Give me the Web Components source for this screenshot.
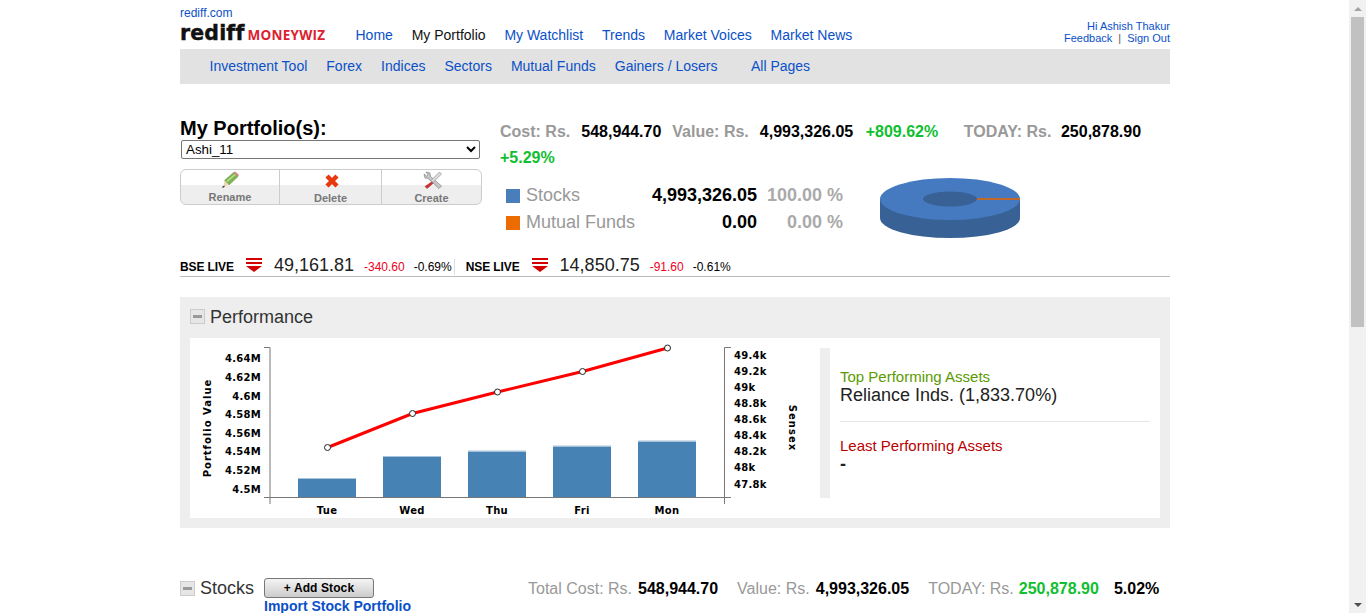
<!DOCTYPE html>
<html>
<head>
<meta charset="utf-8">
<title>My Portfolio</title>
<style>
  html, body { margin: 0; padding: 0; height: 613px; overflow: hidden; background: #fff; }
  body { display: flex; font-family: "Liberation Sans", Arial, sans-serif; }
  #page { flex: 1; height: 613px; overflow: hidden; }
  #wrap { width: 990px; margin-left: 180px; }
</style>
</head>
<body>
<div id="page">
  <div id="wrap">
    <rm-header></rm-header>
    <rm-subnav></rm-subnav>
    <rm-summary></rm-summary>
    <rm-index-strip></rm-index-strip>
    <rm-performance></rm-performance>
    <rm-stocks-bar></rm-stocks-bar>
  </div>
</div>
<rm-scrollbar></rm-scrollbar>

<script>
const LINK = '#0a50c8';

// Barra superior: logo, menu principal y usuario
class RmHeader extends HTMLElement {
  constructor() {
    super();
    this.attachShadow({ mode: 'open' });
    const items = ['Home', 'My Portfolio', 'My Watchlist', 'Trends', 'Market Voices', 'Market News'];
    this.shadowRoot.innerHTML = `
      <style>
        :host { display: flex; height: 49px; position: relative; font-size: 14px; }
        a { color: ${LINK}; text-decoration: none; }
        .brand { width: 175.5px; flex: none; padding-top: 7px; box-sizing: border-box; }
        .top { font-size: 12px; line-height: 13px; display: block; }
        .logo { display: flex; align-items: baseline; height: 22px; line-height: 22px; margin-top: 2px; white-space: nowrap; }
        .rediff { font: 700 20.5px/22px "DejaVu Sans", sans-serif; color: #111; letter-spacing: .15px; -webkit-text-stroke: .4px #111; }
        .wiz { font: 700 13.5px/22px "Open Sans", sans-serif; color: #dc2230; margin-left: 3px; letter-spacing: .25px; }
        nav { display: flex; gap: 18.8px; padding-top: 27px; line-height: 16px; white-space: nowrap; }
        .on { color: #111; }
        .user { margin-left: auto; padding-top: 20px; text-align: right; font-size: 11px; line-height: 12px; color: ${LINK}; white-space: nowrap; }
        .sep { color: #555; margin: 0 6px; }
      </style>
      <div class="brand">
        <a class="top" href="#">rediff.com</a>
        <div class="logo"><span class="rediff">rediff</span><span class="wiz">MONEYWIZ</span></div>
      </div>
      <nav>${items.map(t => `<a href="#" class="${t === 'My Portfolio' ? 'on' : ''}">${t}</a>`).join('')}</nav>
      <div class="user">Hi Ashish Thakur<br><a href="#">Feedback</a><span class="sep">|</span><a href="#">Sign Out</a></div>
    `;
  }
}

class RmSubnav extends HTMLElement {
  constructor() {
    super();
    this.attachShadow({ mode: 'open' });
    const items = ['Investment Tool', 'Forex', 'Indices', 'Sectors', 'Mutual Funds', 'Gainers / Losers'];
    this.shadowRoot.innerHTML = `
      <style>
        :host { display: flex; gap: 19px; height: 35px; align-items: center; padding: 0 0 2px 29.5px; box-sizing: border-box; background: #e2e2e2; font-size: 14px; white-space: nowrap; }
        a { color: ${LINK}; text-decoration: none; }
        .all { margin-left: 14.5px; }
      </style>
      ${items.map(t => `<a href="#">${t}</a>`).join('')}
      <a class="all" href="#">All Pages</a>
    `;
  }
}

// Botones Rename / Delete / Create
class RmToolGroup extends HTMLElement {
  constructor() {
    super();
    this.attachShadow({ mode: 'open' });
    this.shadowRoot.innerHTML = `
      <style>
        :host { display: grid; grid-template-columns: 98px 102px 1fr; width: 302px; height: 36px; box-sizing: border-box; border: 1px solid #ccc; border-radius: 6px; overflow: hidden; background: linear-gradient(#fff 15px, #eee 15px); font: 700 11px/12px "Liberation Sans", sans-serif; color: #777; }
        div { display: flex; flex-direction: column; align-items: center; height: 100%; position: relative; }
        div + div { border-left: 1px solid #ccc; }
        svg { width: 20px; height: 20px; display: block; margin-top: 1px; margin-bottom: -3px; }
        span { margin-top: 3px; }
        .low { margin-top: 4px; }
      </style>
      <div>
        <svg viewBox="0 0 20 20">
          <path d="M4.500 9.500 L13.500 1.500 L18 5.500 L9 14 Z" fill="#7fb552" stroke="#5c8a3a" stroke-width=".5"/>
          <path d="M7 10.500 L15 3.500" stroke="#bfe09a" stroke-width="1.500"/>
          <path d="M13.500 1.500 L15 .5 L19 4 L18 5.500 Z" fill="#d98080"/>
          <path d="M4.500 9.500 L9 14 L3.500 15.500 Z" fill="#ecdcb4"/>
          <path d="M2.500 16.500 L4.500 15" stroke="#333" stroke-width="1.200"/>
        </svg>
        <span>Rename</span>
      </div>
      <div>
        <svg viewBox="0 0 20 20"><path d="M6 5 L16 15 M16 5 L6 15" stroke="#e8380d" stroke-width="4.500" fill="none"/></svg>
        <span class="low">Delete</span>
      </div>
      <div>
        <svg viewBox="0 0 20 20" style="overflow:visible">
          <path d="M4 1 L8 2 L8.500 5.500 L19.500 15 L17 17.500 L6 7.500 L3 7 L2 3 L4.500 5 L6 3.800 Z" fill="#c4c6ca" stroke="#777" stroke-width=".6"/>
          <path d="M17.500 1 L19.500 3 L11 11.500 L9 9.500 Z" fill="#dcdcdc" stroke="#888" stroke-width=".6"/>
          <path d="M9.500 11 L11 12.500 L5 17.500 L3 15.500 Z" fill="#d43030" stroke="#922" stroke-width=".5"/>
        </svg>
        <span class="low">Create</span>
      </div>
    `;
  }
}

// Resumen: selector, totales y distribucion
class RmSummary extends HTMLElement {
  constructor() {
    super();
    this.attachShadow({ mode: 'open' });
    this.shadowRoot.innerHTML = `
      <style>
        :host { display: flex; height: 168px; padding-top: 33px; box-sizing: border-box; }
        .left { width: 320px; flex: none; }
        h1 { margin: 0; font: 700 20px/23px "Liberation Sans", sans-serif; color: #000; }
        select { display: block; width: 299px; height: 19px; margin: 0 0 10px 1px; padding: 0; font: 13.33px "Liberation Sans", sans-serif; color: #000; background: #fff; border: 1px solid #767676; border-radius: 2px; box-sizing: border-box; }
        .right { flex: 1; min-width: 0; }
        .stats { font: 700 16px/26px "Liberation Sans", sans-serif; height: 52px; margin-top: 2px; }
        .g { color: #999; }
        .b { color: #000; }
        .up { color: #10c030; }
        .stats span { margin-right: 11px; }
        .stats .wide { margin-right: 12.5px; }
        .stats .tab { margin-right: 25.5px; }
        .stats .near { margin-right: 9.5px; }
        .alloc { display: flex; margin-top: 11px; padding-left: 6px; }
        .rows { display: grid; grid-template-columns: 20px 120px 111px 86px; grid-auto-rows: 27px; align-items: center; font: 18px/27px "Liberation Sans", sans-serif; }
        .rows i { display: block; width: 14px; height: 14px; }
        .name { color: #999; }
        .val { text-align: right; font-weight: 700; color: #000; }
        .pct { text-align: right; font-weight: 700; color: #aaa; }
        svg { margin: -4px 0 0 37px; display: block; flex: none; }
      </style>
      <div class="left">
        <h1>My Portfolio(s):</h1>
        <select><option>Ashi_11</option></select>
        <rm-tool-group></rm-tool-group>
      </div>
      <div class="right">
        <div class="stats"><span class="g">Cost: Rs.</span><span class="b">548,944.70</span><span class="g">Value: Rs.</span><span class="b wide">4,993,326.05</span><span class="up tab">+809.62%</span><span class="g near">TODAY: Rs.</span><span class="b">250,878.90</span> <span class="up">+5.29%</span></div>
        <div class="alloc">
          <div class="rows">
            <i style="background:#4a7ebb"></i><span class="name">Stocks</span><span class="val">4,993,326.05</span><span class="pct">100.00 %</span>
            <i style="background:#ec6c00"></i><span class="name">Mutual Funds</span><span class="val">0.00</span><span class="pct">0.00 %</span>
          </div>
          <svg width="140" height="62" viewBox="0 0 140 62">
            <path d="M0 21 V40 A70 20 0 0 0 140 40 V21 Z" fill="#386296"/>
            <ellipse cx="70" cy="21" rx="70" ry="21" fill="#457ac0"/>
            <ellipse cx="70" cy="21" rx="27" ry="7.500" fill="#386296"/>
            <rect x="97" y="20" width="43" height="2" fill="#c0682c"/>
          </svg>
        </div>
      </div>
    `;
  }
}

// Linea BSE / NSE
class RmIndexStrip extends HTMLElement {
  constructor() {
    super();
    this.attachShadow({ mode: 'open' });
    const arrow = `<svg width="16" height="14" viewBox="0 0 16 14"><rect x="0" y="0" width="16" height="2" fill="#d40000"/><rect x="0" y="4" width="16" height="2" fill="#d40000"/><path d="M0 8 H16 L8 14 Z" fill="#d40000"/></svg>`;
    this.shadowRoot.innerHTML = `
      <style>
        :host { display: flex; align-items: center; height: 25px; padding-top: 5px; box-sizing: border-box; border-bottom: 1px solid #bbb; font: 12px/14px "Liberation Sans", sans-serif; color: #000; white-space: nowrap; }
        b { letter-spacing: -.1px; }
        svg { margin: -4px 12px 0 12px; flex: none; }
        .num { font-size: 18px; line-height: 20px; color: #222; margin-top: -3px; margin-right: 10px; }
        .down { color: #ee0022; margin-right: 9px; }
        .sep { border-right: 1px solid #ddd; padding-right: 2px; margin-right: 11px; height: 16px; line-height: 16px; }
      </style>
      <b>BSE LIVE</b>${arrow}<span class="num">49,161.81</span><span class="down">-340.60</span><span class="sep">-0.69%</span>
      <b>NSE LIVE</b>${arrow}<span class="num">14,850.75</span><span class="down">-91.60</span><span>-0.61%</span>
    `;
  }
}

// Grafico en SVG: barras (valor) y linea (sensex)
class RmChart extends HTMLElement {
  constructor() {
    super();
    this.attachShadow({ mode: 'open' });
    // coordenadas relativas al panel blanco (190,338)
    const ox = 190, oy = 338;
    const left = [['4.64M', 358], ['4.62M', 377], ['4.6M', 396], ['4.58M', 414], ['4.56M', 433], ['4.54M', 451], ['4.52M', 470], ['4.5M', 489]];
    const right = [['49.4k', 355], ['49.2k', 371], ['49k', 387], ['48.8k', 403], ['48.6k', 419], ['48.4k', 435], ['48.2k', 451], ['48k', 467], ['47.8k', 484]];
    const bars = [['Tue', 298, 479], ['Wed', 383, 457], ['Thu', 468, 451.5], ['Fri', 553, 446.5], ['Mon', 638, 441.5]];
    const pts = [[327.5, 447.5], [412.5, 413.5], [497.5, 392], [582.5, 371.5], [667.5, 348]];
    const tx = (x) => x - ox, ty = (y) => y - oy;
    this.shadowRoot.innerHTML = `
      <style>
        :host { display: block; width: 630px; height: 180px; flex: none; }
        svg { display: block; }
        text { font: 700 10px "DejaVu Sans", sans-serif; fill: #000; letter-spacing: .3px; }
        .vert { letter-spacing: 1px; }
      </style>
      <svg width="630" height="180" viewBox="0 0 630 180">
        ${bars.map(([l, x, top]) => `
          <rect x="${tx(x)}" y="${ty(top)}" width="58" height="${497 - top}" fill="#4682b4"/>
          <rect x="${tx(x)}" y="${ty(top) - 1}" width="58" height="1" fill="#a9c4da"/>
          <text x="${tx(x + 29)}" y="${ty(514)}" text-anchor="middle">${l}</text>`).join('')}
        <path d="M${tx(264)} ${ty(347.5)} H${tx(270)} V${ty(504)} M${tx(264)} ${ty(497.5)} H${tx(731)} M${tx(731)} ${ty(347.5)} H${tx(724.5)} V${ty(504)}" fill="none" stroke="#777" stroke-width="1"/>
        <polyline points="${pts.map(p => `${tx(p[0])},${ty(p[1])}`).join(' ')}" fill="none" stroke="#f00" stroke-width="3"/>
        ${pts.map(p => `<circle cx="${tx(p[0])}" cy="${ty(p[1])}" r="3" fill="#fff" stroke="#222" stroke-width="1"/>`).join('')}
        ${left.map(([l, y]) => `<text x="${tx(261)}" y="${ty(y) + 4}" text-anchor="end">${l}</text>`).join('')}
        ${right.map(([l, y]) => `<text x="${tx(734)}" y="${ty(y) + 4}">${l}</text>`).join('')}
        <text class="vert" transform="translate(${tx(211)} ${ty(428)}) rotate(-90)" text-anchor="middle">Portfolio Value</text>
        <text class="vert" transform="translate(${tx(789)} ${ty(428)}) rotate(90)" text-anchor="middle">Sensex</text>
      </svg>
    `;
  }
}

class RmToggle extends HTMLElement {
  constructor() {
    super();
    this.attachShadow({ mode: 'open' });
    this.shadowRoot.innerHTML = `
      <style>
        :host { display: flex; align-items: center; justify-content: center; width: 15px; height: 15px; box-sizing: border-box; border: 1px solid #ccc; background: #e6e6e6; flex: none; }
        i { display: block; width: 9px; height: 3px; background: #999; }
      </style>
      <i></i>
    `;
  }
}

class RmPerformance extends HTMLElement {
  constructor() {
    super();
    this.attachShadow({ mode: 'open' });
    this.shadowRoot.innerHTML = `
      <style>
        :host { display: block; height: 231px; margin-top: 20px; padding: 0 10px; box-sizing: border-box; background: #eee; }
        .head { display: flex; align-items: center; gap: 5px; height: 39px; padding-bottom: 2px; font: 18px/20px "Liberation Sans", sans-serif; color: #333; }
        .body { display: flex; height: 180px; background: #fff; }
        .assets { flex: 1; margin: 10px 10px 20px 0; padding-left: 10px; border-left: 10px solid #eee; font: 15px/16px "Liberation Sans", sans-serif; }
        .top { padding-top: 21px; height: 52px; border-bottom: 1px solid #e6e6e6; }
        .green { color: #5a9a00; }
        .big { font-size: 18px; line-height: 21px; color: #222; }
        .red { color: #b80000; margin-top: 16px; }
        .dash { font-weight: 700; }
      </style>
      <div class="head"><rm-toggle></rm-toggle><span>Performance</span></div>
      <div class="body">
        <rm-chart></rm-chart>
        <div class="assets">
          <div class="top">
            <div class="green">Top Performing Assets</div>
            <div class="big">Reliance Inds. (1,833.70%)</div>
          </div>
          <div class="red">Least Performing Assets</div>
          <div class="big dash">-</div>
        </div>
      </div>
    `;
  }
}

class RmStocksBar extends HTMLElement {
  constructor() {
    super();
    this.attachShadow({ mode: 'open' });
    this.shadowRoot.innerHTML = `
      <style>
        :host { display: flex; margin-top: 50px; height: 40px; font: 16px/20px "Liberation Sans", sans-serif; white-space: nowrap; }
        .name { display: flex; align-items: center; gap: 5px; height: 20px; width: 84px; font-size: 18px; color: #333; flex: none; }
        .action { width: 264px; flex: none; }
        button { display: block; width: 110px; height: 20px; padding: 0; border: 1px solid #777; border-radius: 3px; background: linear-gradient(#f4f4f4, #ccc); font: 700 12px/16px "Liberation Sans", sans-serif; color: #000; letter-spacing: .1px; }
        .import { display: block; font: 700 14px/17px "Liberation Sans", sans-serif; color: ${LINK}; text-decoration: none; }
        .totals { padding-top: 1px; }
        .totals .g { margin-right: 6px; }
        .totals .today { margin-right: 5px; }
        .g { color: #999; }
        .b { color: #000; font-weight: 700; }
        .up { color: #10c030; font-weight: 700; }
        .gap { margin-right: 19px; }
        .gap15 { margin-right: 15px; }
      </style>
      <div class="name"><rm-toggle></rm-toggle>Stocks</div>
      <div class="action"><button>+ Add Stock</button><a class="import" href="#">Import Stock Portfolio</a></div>
      <div class="totals"><span class="g">Total Cost: Rs.</span><span class="b gap">548,944.70</span><span class="g">Value: Rs.</span><span class="b gap">4,993,326.05</span><span class="g today">TODAY: Rs.</span><span class="up gap15">250,878.90</span><span class="b">5.02%</span></div>
    `;
  }
}

// Scrollbar dibujada, como la del navegador
class RmScrollbar extends HTMLElement {
  constructor() {
    super();
    this.attachShadow({ mode: 'open' });
    this.shadowRoot.innerHTML = `
      <style>
        :host { display: flex; flex-direction: column; width: 17px; height: 613px; flex: none; background: #f1f1f1; }
        .btn { height: 17px; display: flex; align-items: center; justify-content: center; flex: none; }
        .btn i { display: block; border-left: 4px solid transparent; border-right: 4px solid transparent; }
        .up i { border-bottom: 4px solid #a3a3a3; }
        .down i { border-top: 4px solid #505050; }
        .thumb { height: 310px; background: #c1c1c1; margin: 0 2px 0 2px; flex: none; }
        .rest { flex: 1; }
      </style>
      <div class="btn up"><i></i></div>
      <div class="thumb"></div>
      <div class="rest"></div>
      <div class="btn down"><i></i></div>
    `;
  }
}

customElements.define('rm-tool-group', RmToolGroup);
customElements.define('rm-toggle', RmToggle);
customElements.define('rm-chart', RmChart);
customElements.define('rm-header', RmHeader);
customElements.define('rm-subnav', RmSubnav);
customElements.define('rm-summary', RmSummary);
customElements.define('rm-index-strip', RmIndexStrip);
customElements.define('rm-performance', RmPerformance);
customElements.define('rm-stocks-bar', RmStocksBar);
customElements.define('rm-scrollbar', RmScrollbar);
</script>
</body>
</html>
